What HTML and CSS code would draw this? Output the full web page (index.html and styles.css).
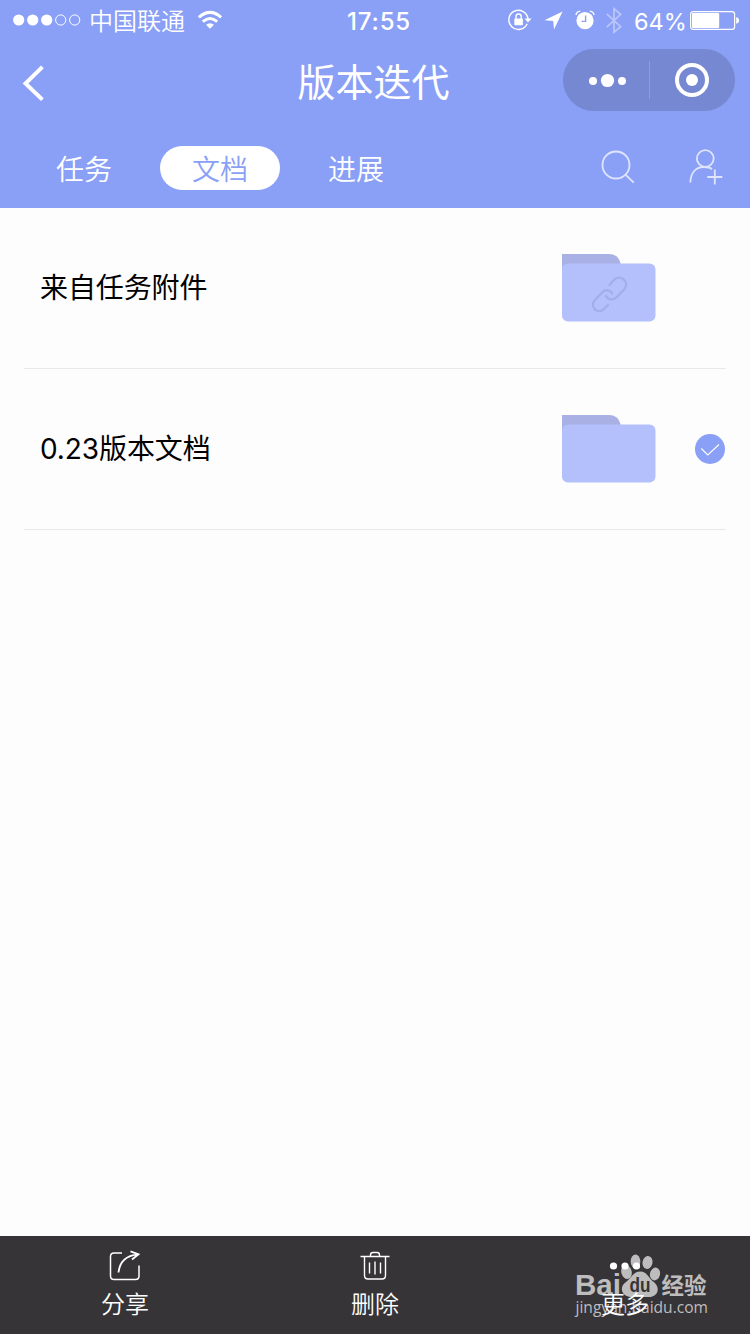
FILE: index.html
```html
<!DOCTYPE html>
<html lang="zh-CN">
<head>
    <meta charset="UTF-8">
    <meta name="viewport" content="width=device-width, initial-scale=1.0">
    <title>版本迭代</title>
    <link rel="stylesheet" href="styles.css">
</head>
<body>
    <div class="page">
        <header class="header">
            <div class="status-bar">
                <div class="status-left">
                    <svg class="signal" width="68" height="12" viewBox="0 0 68 12">
                        <g fill="#fff">
                            <circle cx="5.7" cy="6" r="5.6"/>
                            <circle cx="19.7" cy="6" r="5.6"/>
                            <circle cx="33.7" cy="6" r="5.6"/>
                        </g>
                        <g fill="none" stroke="#fff">
                            <circle cx="47.7" cy="6" r="5.1"/>
                            <circle cx="61.7" cy="6" r="5.1"/>
                        </g>
                    </svg>
                    <span class="carrier">中国联通</span>
                    <svg class="wifi" width="26" height="20" viewBox="0 0 26 20">
                        <g fill="none" stroke="#fff" stroke-width="3">
                            <path d="M1.9 7.4Q13-2.6 24.1 7.4"/>
                            <path d="M5.8 11.7Q13 5.3 20.2 11.7"/>
                        </g>
                        <path d="M9 14.8Q13 11.6 17 14.8L13 18.8z" fill="#fff"/>
                    </svg>
                </div>
                <div class="clock">17:55</div>
                <div class="status-right">
                    <svg class="lock" width="24" height="22" viewBox="0 0 24 22">
                        <path d="M19.2 14.8A9.6 9.6 0 1 1 20 10" fill="none" stroke="#fff" stroke-width="1.4"/>
                        <path d="M16.6 9.6h7L20 13.6z" fill="#fff"/>
                        <rect x="6.3" y="9.6" width="8.6" height="6.6" rx=".8" fill="#fff"/>
                        <path d="M8 10V7.6a2.6 2.6 0 0 1 5.2 0V10" fill="none" stroke="#fff" stroke-width="1.4"/>
                    </svg>
                    <svg class="location" width="19" height="19" viewBox="0 0 19 19">
                        <path d="M18.6.4L.4 9.2l8.8.8.8 8.6z" fill="#fff"/>
                    </svg>
                    <svg class="alarm" width="20" height="20" viewBox="0 0 20 20">
                        <circle cx="10" cy="10.6" r="8.6" fill="#fff"/>
                        <path d="M.9 5A5 5 0 0 1 5.2 1.2M14.8 1.2A5 5 0 0 1 19.1 5" fill="none" stroke="#fff" stroke-width="1.3"/>
                        <path d="M10.6 5.6v5.8H6.6" fill="none" stroke="#8a9ff6" stroke-width="1.4"/>
                    </svg>
                    <svg class="bluetooth" width="16" height="27" viewBox="0 0 16 27">
                        <path d="M.8 6.8L14.6 19.6 8 25.2V1.8l6.6 5.6L.8 20.2" fill="none" stroke="#b9c5fb" stroke-width="1.8"/>
                    </svg>
                    <span class="percent">64%</span>
                    <svg class="battery" width="50" height="19" viewBox="0 0 50 19">
                        <rect x=".6" y=".6" width="44" height="17.8" rx="2.6" fill="none" stroke="#fff" stroke-width="1.2"/>
                        <rect x="2" y="2" width="27.2" height="15" rx="1" fill="#fff"/>
                        <path d="M46.2 6.3q2.8.4 2.8 3.2t-2.8 3.2z" fill="#fff"/>
                    </svg>
                </div>
            </div>

            <div class="nav-bar">
                <svg class="back" width="24" height="38" viewBox="0 0 24 38">
                    <path d="M21.4 2.800L4.500 19.500 21.400 35.600" fill="none" stroke="#fff" stroke-width="4"/>
                </svg>
                <h1 class="title">版本迭代</h1>
                <div class="capsule">
                    <svg width="172" height="62" viewBox="0 0 172 62">
                        <g fill="#fff">
                            <circle cx="30" cy="32" r="4"/>
                            <circle cx="44.5" cy="31.5" r="6.6"/>
                            <circle cx="59" cy="32" r="4"/>
                            <circle cx="129" cy="31" r="6"/>
                        </g>
                        <path d="M86.5 12v38" stroke="#8b9ce0"/>
                        <circle cx="129" cy="31" r="15" fill="none" stroke="#fff" stroke-width="4"/>
                    </svg>
                </div>
            </div>

            <div class="tab-bar">
                <div class="tabs">
                    <span class="tab">任务</span>
                    <span class="tab active">文档</span>
                    <span class="tab">进展</span>
                </div>
                <div class="actions">
                    <svg width="34" height="34" viewBox="0 0 34 34" fill="none" stroke="#dfe5fd" stroke-width="1.8">
                        <circle cx="15" cy="15" r="13.5"/>
                        <path d="M24.4 24.6l8.4 8"/>
                    </svg>
                    <svg width="34" height="36" viewBox="0 0 34 36" fill="none" stroke="#dfe5fd" stroke-width="1.8">
                        <circle cx="16.3" cy="9.5" r="8.4"/>
                        <path d="M1.3 33.5C1.8 23.5 7 18 14.8 18c3.2 0 6.2.5 8.2 2.2M25.8 20.5v15M18.3 28h15"/>
                    </svg>
                </div>
            </div>
        </header>

        <main class="list">
            <div class="row">
                <span class="name">来自任务附件</span>
                <svg class="folder" width="94" height="68" viewBox="0 0 94 68">
                    <path d="M0 0h47q9 0 11.5 9v8H0z" fill="#a8b0e4"/>
                    <rect y="9.5" width="93.5" height="58" rx="6" fill="#b3c0fc"/>
                    <g fill="none" stroke="#a2aee8" stroke-width="2.3" stroke-linecap="round">
                        <path d="M47.5 31l4.5-5c6-6.500 16 1.500 10.500 9l-7.500 8c-3.500 3.500-9 3-11-1"/>
                        <path d="M46 51l-4 4.200c-6 5.500-14.500-2-9.500-8.700l8-8.500c3.500-3 8-2 9.500 1.500"/>
                    </g>
                </svg>
            </div>
            <div class="row">
                <span class="name">0.23版本文档</span>
                <svg class="folder" width="94" height="68" viewBox="0 0 94 68">
                    <path d="M0 0h47q9 0 11.5 9v8H0z" fill="#a8b0e4"/>
                    <rect y="9.5" width="93.5" height="58" rx="6" fill="#b3c0fc"/>
                </svg>
                <svg class="check" width="30" height="30" viewBox="0 0 30 30">
                    <circle cx="15" cy="15" r="15" fill="#8a9ff6"/>
                    <path d="M6.3 14.5l6.5 6.5L24 10.5" fill="none" stroke="#fff" stroke-width="1.1"/>
                </svg>
            </div>
        </main>

        <footer class="toolbar">
            <div class="tool">
                <svg width="34" height="34" viewBox="0 0 34 34" fill="none" stroke="#fff" stroke-width="1.5">
                    <path d="M14 4H6Q2.5 4 2.5 7.5V27q0 3.5 3.5 3.5H27.5q3.5 0 3.5-3.5V16.5"/>
                    <path d="M10.5 23.5C11.5 14 17.5 6.5 30 5.3M22.5 2.3l8 3-6.5 5.2" stroke-width="1.8"/>
                </svg>
                <span>分享</span>
            </div>
            <div class="tool">
                <svg width="34" height="34" viewBox="0 0 34 34" fill="none" stroke="#fff" stroke-width="1.4">
                    <path d="M2.5 7.5h29M12.5 7.5V6q0-2.5 2.5-2.5h4q2.5 0 2.5 2.5v1.5M6.5 7.5v19q0 3.5 3.5 3.5h14q3.5 0 3.5-3.5v-19M11.5 13.5v11M17 12.5v13M22.5 13.5v11"/>
                </svg>
                <span>删除</span>
            </div>
            <div class="tool">
                <svg width="34" height="34" viewBox="0 0 34 34" fill="#fff">
                    <circle cx="5.5" cy="17" r="3.6"/>
                    <circle cx="17" cy="17" r="3.6"/>
                    <circle cx="28.5" cy="17" r="3.6"/>
                </svg>
                <span>更多</span>
            </div>
        </footer>

        <!-- watermark, stays under the toolbar labels -->
        <svg class="watermark" width="136" height="70" viewBox="0 0 136 70">
            <g fill="#bebdbe">
                <text class="wm-brand" x="1" y="41.5" textLength="46" lengthAdjust="spacingAndGlyphs">Bai</text>
                <ellipse cx="52.5" cy="19" rx="5.2" ry="7" transform="rotate(-14 52.5 19)"/>
                <ellipse cx="61.5" cy="8.5" rx="4.8" ry="7"/>
                <ellipse cx="73.5" cy="9.5" rx="5" ry="6.5" transform="rotate(12 73.5 9.5)"/>
                <ellipse cx="81" cy="21" rx="5" ry="6.5" transform="rotate(14 81 21)"/>
                <path d="M66.5 18.5c6 0 8 6 12.500 10 8 5.500 5.500 15.500-4 15.500H58c-11 0-13-10.500-6-15 5-4 7.500-10.500 14.500-10.500z"/>
                <text class="wm-cn" x="87.5" y="40.5" textLength="45" lengthAdjust="spacingAndGlyphs">经验</text>
                <text class="wm-url" x="1.5" y="60" textLength="132.5" lengthAdjust="spacingAndGlyphs">jingyan.baidu.com</text>
            </g>
            <text class="wm-du" x="55.5" y="39" textLength="21" lengthAdjust="spacingAndGlyphs" fill="#363437">du</text>
        </svg>
    </div>
</body>
</html>
```
FILE: styles.css
```css
:root {
    --primary-color: #8a9ff6;
    --background-color: #fdfdfe;
    --capsule-color: #7688d1;
    --border-color: #e9e9ec;
    --toolbar-color: #363437;
    --toolbar-text: #fff;
}

* {
    box-sizing: border-box;
}

body {
    margin: 0;
    font-family: "Liberation Sans", "Noto Sans CJK SC", sans-serif;
    background-color: var(--background-color);
    color: #000;
}

svg {
    display: block;
    flex-shrink: 0;
}

.page {
    position: relative;
    display: flex;
    flex-direction: column;
    height: 1334px;
    overflow: hidden;
}

.header {
    height: 208px;
    background-color: var(--primary-color);
    color: #fff;
}

/* status bar */
.status-bar {
    display: grid;
    grid-template-columns: 1fr auto 1fr;
    align-items: center;
    height: 40px;
    padding: 0 10px 0 13px;
}

.status-left,
.status-right {
    display: flex;
    align-items: center;
}

.status-right {
    justify-content: flex-end;
}

.carrier {
    margin: 0 12px 0 8px;
    padding-top: 3px;
    font-size: 24px;
    font-weight: 350;
    line-height: 37px;
}

.clock {
    padding: 2px 0 0 5px;
    font-family: Inter, sans-serif;
    font-size: 24px;
    font-weight: 500;
    letter-spacing: 0.8px;
}

.location {
    margin-left: 12px;
}

.alarm {
    margin-left: 12px;
}

.bluetooth {
    margin-left: 11px;
}

.percent {
    width: 50px;
    margin: 0 6px 0 12px;
    padding-top: 2px;
    font-family: Inter, sans-serif;
    font-size: 23.5px;
    font-weight: 400;
}

/* title and capsule */
.nav-bar {
    display: grid;
    grid-template-columns: 1fr auto 1fr;
    align-items: center;
    height: 80px;
    padding: 0 15px 0 21px;
}

.back {
    margin-top: 6px;
}

.title {
    margin: 0 9px 0 0;
    padding-top: 7px;
    font-size: 38px;
    font-weight: 400;
    line-height: 73px;
}

.capsule {
    justify-self: end;
    width: 172px;
    height: 62px;
    border-radius: 31px;
    background-color: var(--capsule-color);
}

/* tabs */
.tab-bar {
    display: flex;
    align-items: center;
    justify-content: space-between;
    height: 88px;
    padding: 8px 27px 8px 24px;
}

.tabs {
    display: flex;
    gap: 16px;
    margin-top: 8px;
}

.tab {
    width: 120px;
    height: 44px;
    padding-top: 5px;
    border-radius: 22px;
    font-size: 28px;
    font-weight: 350;
    line-height: 39px;
    text-align: center;
}

.tab.active {
    background-color: #fff;
    color: var(--primary-color);
}

.actions {
    display: flex;
    align-items: center;
    gap: 54px;
    margin-top: 6px;
}

/* documents */
.list {
    flex: 1;
    padding: 0 24px;
}

.row {
    display: flex;
    align-items: center;
    height: 161px;
    padding-left: 16px;
    border-bottom: 1px solid var(--border-color);
}

.name {
    width: 522px;
    padding-bottom: 4px;
    font-family: Inter, "Noto Sans CJK SC", sans-serif;
    font-size: 28px;
    font-weight: 380;
    letter-spacing: -0.1px;
}

.check {
    margin-left: 39px;
}

/* bottom toolbar */
.toolbar {
    display: flex;
    height: 98px;
    background-color: var(--toolbar-color);
    color: var(--toolbar-text);
}

.tool {
    z-index: 2;
    flex: 1;
    display: flex;
    flex-direction: column;
    align-items: center;
    padding-top: 13px;
    font-size: 24px;
    font-weight: 350;
    line-height: 44px;
}

.watermark {
    position: absolute;
    z-index: 1;
    left: 574px;
    bottom: 11px;
}

.wm-brand {
    font-size: 30px;
    font-weight: 700;
}

.wm-cn {
    font-size: 23px;
    font-weight: 700;
}

.wm-du {
    font-size: 20px;
    font-weight: 700;
}

.wm-url {
    font-family: "Open Sans", sans-serif;
    font-size: 16px;
}
```
